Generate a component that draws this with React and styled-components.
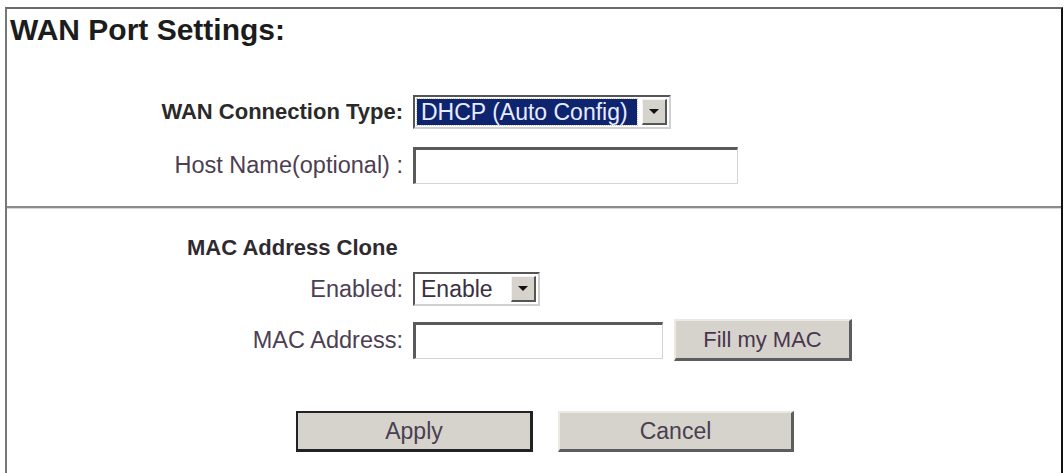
import React from 'react'
import styled, { createGlobalStyle } from 'styled-components'

const Global = createGlobalStyle`
  html, body {
    margin: 0;
    background: #fff;
    overflow: hidden;
  }
  body {
    font-family: "Liberation Sans", Arial, sans-serif;
  }
`

const Frame = styled.div`
  margin: 7px 0 0 5px;
  width: 1054px;
  height: 520px;
  border-top: 2px solid #6a6a6a;
  border-left: 2px solid #777;
  border-right: 2px solid #111;
`

const Title = styled.h1`
  margin: 0;
  padding: 4px 0 0 3px;
  font-size: 30px;
  font-weight: bold;
  color: #1c1c1c;
  line-height: 34px;
`

const Section = styled.div`
  display: grid;
  grid-template-columns: 396px auto;
  column-gap: 10px;
  row-gap: ${p => p.$gap || 18}px;
  align-items: center;
  justify-items: start;
  padding-top: ${p => p.$top || 0}px;
`

const Label = styled.label`
  justify-self: end;
  font-size: ${p => (p.$bold ? 22 : 23.5)}px;
  font-weight: ${p => (p.$bold ? 'bold' : 'normal')};
  color: ${p => (p.$bold ? '#2a2a2a' : '#4d3e52')};
  white-space: nowrap;
`

const SubHead = styled.div`
  padding: 27px 0 0 180px;
  font-size: 22px;
  line-height: 24px;
  font-weight: bold;
  color: #2e2a30;
`

const Divider = styled.hr`
  margin: 22px 0 0;
  border: none;
  border-top: 2px solid #8c8c8c;
  border-bottom: 1px solid #d8d8d8;
`

const SelectBox = styled.div`
  box-sizing: border-box;
  width: ${p => p.$w}px;
  height: ${p => p.$h}px;
  display: flex;
  align-items: stretch;
  padding: 2px;
  border-top: 2px solid #555;
  border-left: 2px solid #555;
  border-right: 2px solid #d0d0d0;
  border-bottom: 2px solid #d0d0d0;
  background: #fff;
`

const SelectValue = styled.div`
  flex: 1;
  display: flex;
  align-items: center;
  padding: 0 4px;
  font-size: 23px;
  white-space: nowrap;
  color: ${p => (p.$focus ? '#e8ecff' : '#3b3040')};
  background: ${p => (p.$focus ? '#0f246e' : 'transparent')};
  outline: ${p => (p.$focus ? '1px dotted #c9c9c9' : 'none')};
`

const Arrow = styled.div`
  width: 22px;
  margin-left: 5px;
  display: flex;
  align-items: center;
  justify-content: center;
  background: #d6d3cc;
  border-top: 1px solid #f4f4f4;
  border-left: 1px solid #f4f4f4;
  border-right: 2px solid #555;
  border-bottom: 2px solid #555;

  &::after {
    content: '';
    border-left: 5px solid transparent;
    border-right: 5px solid transparent;
    border-top: 5px solid #111;
  }
`

const TextInput = styled.input`
  box-sizing: border-box;
  width: ${p => p.$w}px;
  height: ${p => p.$h}px;
  margin: 0;
  border-top: 3px solid #5a5a5a;
  border-left: 3px solid #5a5a5a;
  border-right: 1px solid #d4d4d4;
  border-bottom: 1px solid #d4d4d4;
  background: #fff;
  font-size: 20px;
  font-family: inherit;
  outline: none;
`

const InputWithButton = styled.div`
  display: flex;
  align-items: center;
  gap: 11px;
`

const Btn = styled.button`
  box-sizing: border-box;
  width: ${p => p.$w}px;
  height: ${p => p.$h}px;
  margin: 0;
  padding: 0;
  font-family: inherit;
  font-size: ${p => p.$size || 22}px;
  color: ${p => p.$color || '#4a3f50'};
  background: #d6d3cc;
  border-top: 2px solid ${p => (p.$default ? '#222' : '#ece9e3')};
  border-left: 2px solid ${p => (p.$default ? '#222' : '#ece9e3')};
  border-right: 3px solid ${p => (p.$default ? '#222' : '#5d5d5d')};
  border-bottom: 3px solid ${p => (p.$default ? '#222' : '#5d5d5d')};
  cursor: pointer;
`

const Actions = styled.div`
  display: flex;
  gap: 25px;
  padding: 50px 0 0 289px;
`

export default function App() {
  return (
    <>
      <Global />
      <Frame>
        <Title>WAN Port Settings:</Title>

        <Section $top={48} $gap={18}>
          <Label $bold>WAN Connection Type:</Label>
          <SelectBox $w={258} $h={34}>
            <SelectValue $focus>DHCP (Auto Config)</SelectValue>
            <Arrow />
          </SelectBox>

          <Label>Host Name(optional) :</Label>
          <TextInput $w={325} $h={37} />
        </Section>

        <Divider />

        <SubHead>MAC Address Clone</SubHead>

        <Section $top={12} $gap={13}>
          <Label>Enabled:</Label>
          <SelectBox $w={127} $h={34}>
            <SelectValue>Enable</SelectValue>
            <Arrow />
          </SelectBox>

          <Label>MAC Address:</Label>
          <InputWithButton>
            <TextInput $w={250} $h={37} />
            <Btn $w={178} $h={42} $color="#4a3550">Fill my MAC</Btn>
          </InputWithButton>
        </Section>

        <Actions>
          <Btn $w={237} $h={41} $size={23} $default>Apply</Btn>
          <Btn $w={236} $h={41} $size={23}>Cancel</Btn>
        </Actions>
      </Frame>
    </>
  )
}
